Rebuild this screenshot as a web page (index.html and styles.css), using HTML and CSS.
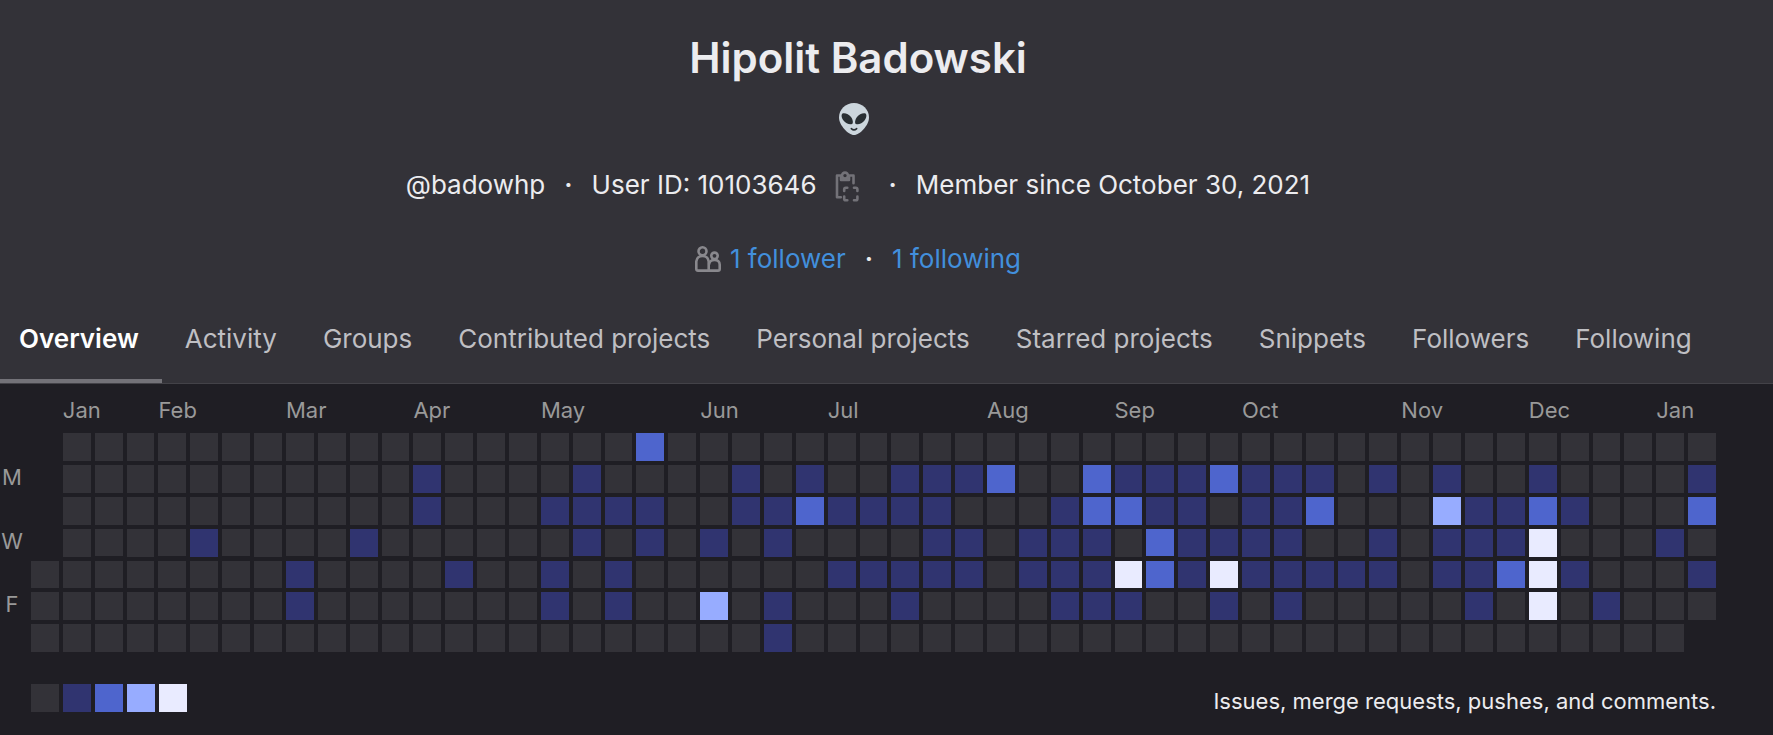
FILE: index.html
```html
<!DOCTYPE html>
<html lang="en">
<head>
<meta charset="utf-8">
<title>Hipolit Badowski</title>
<meta name="viewport" content="width=device-width, initial-scale=1">
<link rel="stylesheet" href="styles.css">
</head>
<body>
<header class="profile">
  <div class="profile-info">
    <h1 class="name">Hipolit Badowski</h1>
    <div class="status">
      <svg class="status-emoji" viewBox="0 0 30 32" role="img" aria-label="Alien">
        <path fill="#ccd6dd" d="M15 0C23.500 0 30 6.500 30 14.500 30 22 21 32 15 32S0 22 0 14.500C0 6.500 6.500 0 15 0z"/>
        <path fill="#292f33" d="M3.500 10.500C6 9.500 10 11.500 12 14 14 16.500 14.500 20.500 13 21 10.500 22 6.500 20 4.500 17.500 2.500 15 2 11.500 3.500 10.500zM26.500 10.500C24 9.500 20 11.500 18 14 16 16.500 15.500 20.500 17 21 19.500 22 23.500 20 25.500 17.500 27.500 15 28 11.500 26.500 10.500z"/>
        <path fill="none" stroke="#292f33" stroke-width="1.500" stroke-linecap="round" d="M12.300 25.600C13.800 27 16.200 27 17.700 25.600"/>
      </svg>
    </div>
    <div class="meta">
      <span>@badowhp</span>
      <span class="dot">·</span>
      <span>User ID: 10103646</span>
      <button class="copy" type="button" aria-label="Copy user ID">
        <svg class="copy-icon" viewBox="0 0 24 31" fill="none" stroke="currentColor" stroke-width="2.600" stroke-linecap="round" stroke-linejoin="round">
          <path d="M5.500 4.500H2V26.300H5.800M14.500 4.500H18.500V12.300M6 5V9H14V5"/>
          <circle cx="10" cy="4.600" r="3"/>
          <path d="M9.200 20V18.400Q9.200 16.800 10.800 16.800H12.300M19 16.800H20.800Q22.400 16.800 22.400 18.400V20M22.400 25.500V27.700Q22.400 29.300 20.800 29.300H19M12.300 29.300H10.800Q9.200 29.300 9.200 27.700V25.500"/>
        </svg>
      </button>
      <span class="dot">·</span>
      <span>Member since October 30, 2021</span>
    </div>
    <div class="follow">
      <svg class="people-icon" viewBox="0 0 26 26" fill="none" stroke="currentColor" stroke-width="2.600" aria-hidden="true">
        <circle cx="7.500" cy="5.300" r="4"/>
        <path d="M1.300 23V15.500Q2 10 7.500 10T13.700 15.500V24.600H3Q1.300 24.600 1.300 23z"/>
        <circle cx="19.500" cy="9.800" r="3.200"/>
        <path d="M14 18.500Q14.500 14 19.500 14T24.700 18.500V23Q24.700 24.600 23 24.600H13.700"/>
      </svg>
      <a class="link" href="#followers">1 follower</a>
      <span class="dot">·</span>
      <a class="link" href="#following">1 following</a>
    </div>
  </div>
  <nav class="tabs">
    <a class="tab active" href="#overview" aria-current="page">Overview</a>
    <a class="tab" href="#activity">Activity</a>
    <a class="tab" href="#groups">Groups</a>
    <a class="tab" href="#contributed">Contributed projects</a>
    <a class="tab" href="#personal">Personal projects</a>
    <a class="tab" href="#starred">Starred projects</a>
    <a class="tab" href="#snippets">Snippets</a>
    <a class="tab" href="#followers">Followers</a>
    <a class="tab" href="#following">Following</a>
  </nav>
</header>
<main class="activity">
  <div class="calendar" id="calendar"></div>
  <div class="calendar-footer">
    <div class="legend">
      <span class="day level-0"></span>
      <span class="day level-1"></span>
      <span class="day level-2"></span>
      <span class="day level-3"></span>
      <span class="day level-4"></span>
    </div>
    <p class="hint">Issues, merge requests, pushes, and comments.</p>
  </div>
</main>
<script src="calendar.js"></script>
</body>
</html>
```
FILE: styles.css
```css
* {
  box-sizing: border-box;
}

body {
  margin: 0;
  background: #1f1e24;
  color: #ececef;
  font-family: Inter, "Noto Sans", sans-serif;
  font-size: 26px;
  line-height: 40px;
}

.profile {
  background: #333238;
  border-bottom: 1px solid #434248;
}

.profile-info {
  display: flex;
  flex-direction: column;
  align-items: center;
  padding: 34px 57px 24px 0;
}

.name {
  margin: 0;
  font-size: 42px;
  font-weight: 600;
  line-height: 48px;
}

.status {
  display: flex;
  margin-top: 21px;
  padding-right: 8px;
}

.status-emoji {
  width: 30px;
  height: 32px;
}

.meta,
.follow {
  display: flex;
  align-items: center;
}

.meta {
  margin-top: 30px;
}

.follow {
  margin-top: 34px;
}

.dot {
  margin: 0 19px;
  font-weight: 600;
}

.copy {
  display: flex;
  margin: 0 11px 0 18px;
  padding: 2px 0 0;
  border: 0;
  background: none;
  color: #737278;
}

.copy-icon {
  width: 24px;
  height: 31px;
}

.people-icon {
  width: 26px;
  height: 26px;
  margin-right: 9px;
  color: #89888d;
}

.link {
  color: #428fdc;
  text-decoration: none;
}

.tabs {
  display: flex;
  white-space: nowrap;
}

.tab {
  padding: 16px 23px 20px;
  border-bottom: 4px solid transparent;
  color: #bfbfc3;
  text-decoration: none;
}

.tab.active {
  padding-left: 19px;
  border-bottom-color: #737278;
  color: #fff;
  font-weight: 600;
}

.activity {
  padding: 12px 57px 17px 0;
}

.calendar {
  display: grid;
  grid-template-columns: 27px repeat(53, minmax(0, 1fr));
  grid-template-rows: 33px;
  gap: 4px;
}

.month,
.weekday {
  color: #999;
  font-size: 22px;
}

.month {
  line-height: 28px;
  white-space: nowrap;
}

.weekday {
  height: 24px;
  padding-right: 3px;
  line-height: 24px;
  text-align: center;
}

.day {
  aspect-ratio: 1;
}

.level-0 { background: #333238; }
.level-1 { background: #303470; }
.level-2 { background: #4e65cd; }
.level-3 { background: #97acff; }
.level-4 { background: #e9ebff; }

.calendar-footer {
  display: flex;
  justify-content: space-between;
  margin-top: 32px;
  padding-left: 31px;
}

.legend {
  display: flex;
  gap: 4px;
}

.legend .day {
  width: 28px;
  height: 28px;
}

.hint {
  margin: 0;
  font-size: 22px;
  line-height: 34px;
}
```
FILE: calendar.js
```js
// Contribution level per week, one list per weekday starting on Sunday.
const levels = [
  { 2: [19] },
  { 1: [12, 17, 22, 24, 27, 28, 29, 34, 35, 36, 38, 39, 40, 42, 44, 47, 52], 2: [30, 33, 37] },
  { 1: [12, 16, 17, 18, 19, 22, 23, 25, 26, 27, 28, 32, 35, 36, 38, 39, 45, 46, 48], 2: [24, 33, 34, 40, 47, 52], 3: [44] },
  { 1: [5, 10, 17, 19, 21, 23, 28, 29, 31, 32, 33, 36, 37, 38, 39, 42, 44, 45, 46, 51], 2: [35], 4: [47] },
  { 1: [8, 13, 16, 18, 25, 26, 27, 28, 29, 31, 32, 33, 36, 38, 39, 40, 41, 42, 44, 45, 48, 52], 2: [35, 46], 4: [34, 37, 47] },
  { 1: [8, 16, 18, 23, 27, 32, 33, 34, 37, 39, 45, 49], 3: [21], 4: [47] },
  { 1: [23] }
];
const months = [
  ["Jan", 1], ["Feb", 4], ["Mar", 8], ["Apr", 12], ["May", 16], ["Jun", 21], ["Jul", 25],
  ["Aug", 30], ["Sep", 34], ["Oct", 38], ["Nov", 43], ["Dec", 47], ["Jan", 51]
];
const weekdays = [["M", 1], ["W", 3], ["F", 5]];
const weekCount = 53;
const calendar = document.getElementById("calendar");

function place(className, text, row, column, span = 1) {
  const item = document.createElement("div");
  item.className = className;
  item.textContent = text;
  item.style.gridArea = `${row} / ${column} / span 1 / span ${span}`;
  calendar.append(item);
}

months.forEach(([name, week]) => place("month", name, 1, week + 2, 2));
weekdays.forEach(([name, day]) => place("weekday", name, day + 2, 1));

for (let week = 0; week < weekCount; week++) {
  for (let day = 0; day < 7; day++) {
    const outsideYear = (week === 0 && day < 4) || (week === weekCount - 1 && day === 6);
    if (outsideYear) continue;
    const match = Object.keys(levels[day]).find(level => levels[day][level].includes(week));
    place(`day level-${match || 0}`, "", day + 2, week + 2);
  }
}
```
